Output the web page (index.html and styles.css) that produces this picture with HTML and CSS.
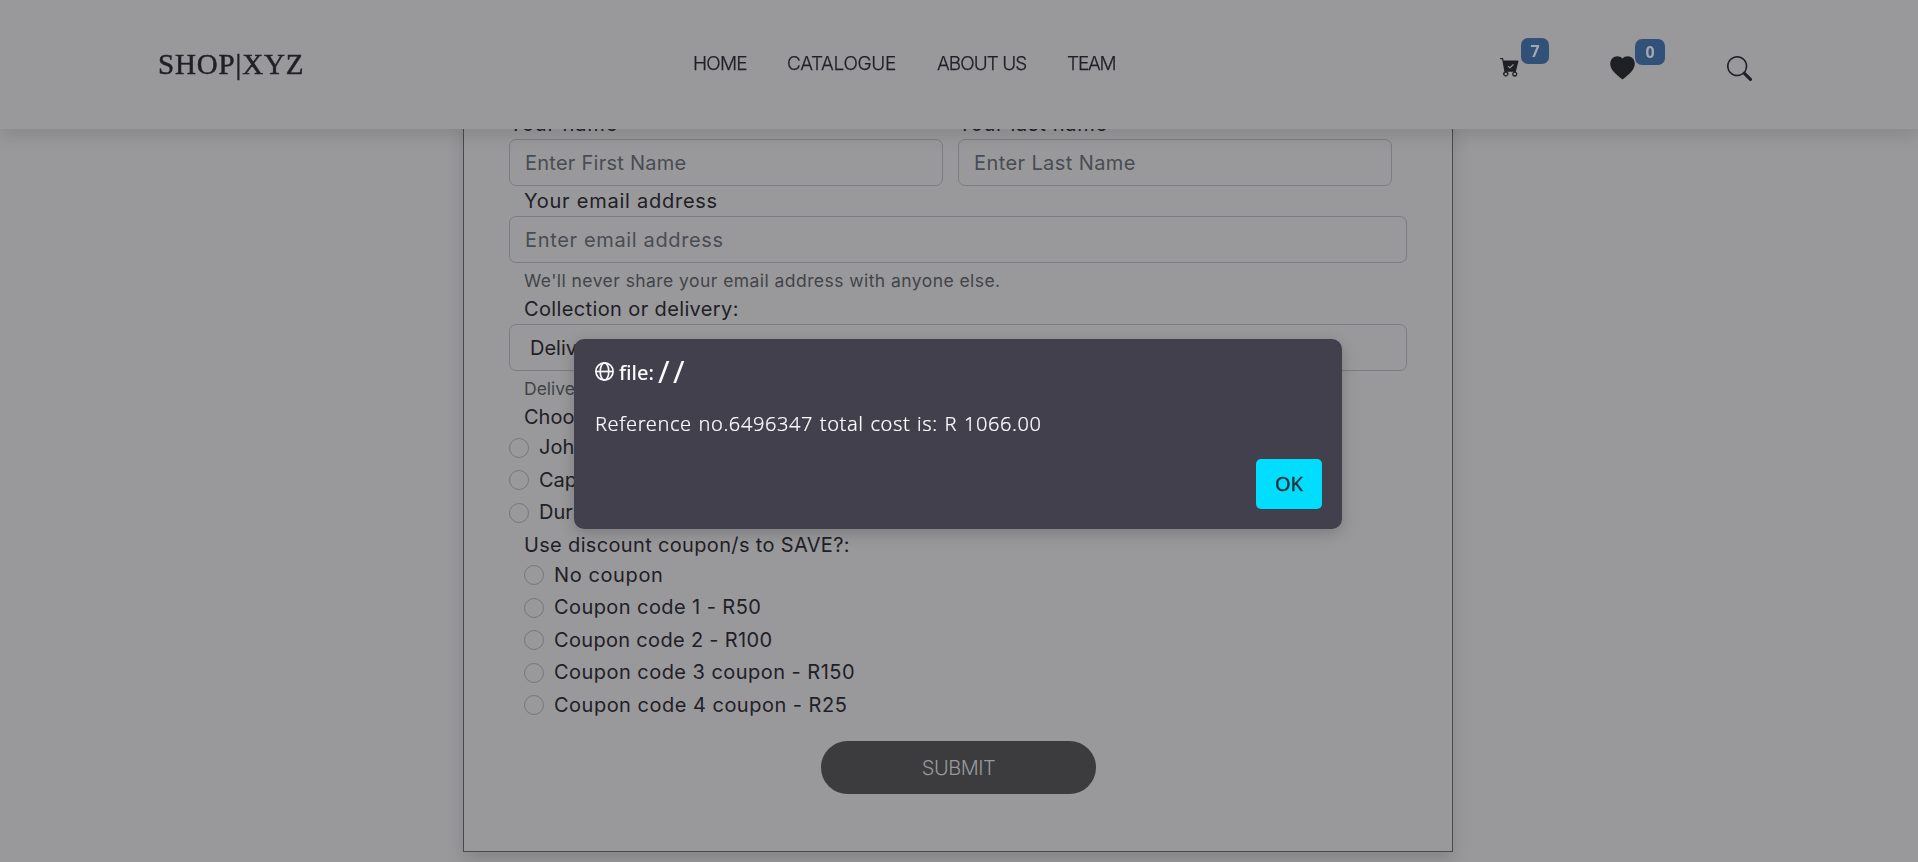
FILE: index.html
```
<!DOCTYPE html>
<html lang="en">
<head>
<meta charset="utf-8">
<title>SHOP|XYZ</title>
<link rel="stylesheet" href="styles.css">
</head>
<body>
<header class="header">
  <div class="logo">SHOP|XYZ</div>
  <nav class="nav"><a class="n1">HOME</a><a class="n2">CATALOGUE</a><a class="n3">ABOUT US</a><a class="n4">TEAM</a></nav>
  <div class="tools">
    <div class="tool cart">
      <svg width="19" height="19" viewBox="0 0 16 16" fill="currentColor"><path fill-rule="evenodd" d="M.5 0a.5.5 0 0 0 0 1h1.300l1.900 10.500a2.200 2.200 0 1 0 2.300 0h5.500a2.200 2.200 0 1 0 1.800 0l2.200-8.500a.6.6 0 0 0-.5-.8H3L2.700.4A.5.5 0 0 0 2.200 0zM4.900 12.400a1.100 1.100 0 1 1 0 2.200 1.100 1.100 0 0 1 0-2.200zm7.500 0a1.100 1.100 0 1 1 0 2.200 1.100 1.100 0 0 1 0-2.200zM11.700 5.700 8.700 8.700a.5.5 0 0 1-.7 0L6.500 7.200l.7-.7 1.150 1.150L11 5z"/></svg>
      <span class="badge">7</span>
    </div>
    <div class="tool heart">
      <svg width="25" height="24" viewBox="0 0 25 24" fill="currentColor"><path d="M12.500 2.500C9.500-1 4-.5 1.500 3.200-1 7.500.4 12 3.500 15.500c2.700 3.100 6 5.600 9 8 3-2.400 6.300-4.900 9-8 3.100-3.500 4.500-8 2-12.300C21-.5 15.500-1 12.500 2.500z"/></svg>
      <span class="badge zero">0</span>
    </div>
    <svg class="search" width="25" height="25" viewBox="0 0 16 16" fill="currentColor"><path d="M11.742 10.344a6.500 6.500 0 1 0-1.397 1.398h-.001c.03.04.062.078.098.115l3.850 3.850a1 1 0 0 0 1.415-1.414l-3.850-3.850a1.007 1.007 0 0 0-.115-.1zM12 6.500a5.500 5.500 0 1 1-11 0 5.500 5.500 0 0 1 11 0z"/></svg>
  </div>
</header>
<main class="card">
  <div class="names">
    <div class="name"><div class="label t1">Your name</div><div class="field"><span class="p1">Enter First Name</span></div></div>
    <div class="name"><div class="label t2">Your last name</div><div class="field"><span class="p2">Enter Last Name</span></div></div>
  </div>
  <div class="label in"><span class="t3">Your email address</span></div>
  <div class="field"><span class="p3">Enter email address</span></div>
  <div class="help"><span class="h1">We'll never share your email address with anyone else.</span></div>
  <div class="label in"><span class="t4">Collection or delivery:</span></div>
  <div class="field select"><span>Delivery</span></div>
  <div class="help"><span>Delivery fee</span></div>
  <div class="label in"><span>Choose</span></div>
  <div class="radio"><i></i><span>Johannesburg</span></div>
  <div class="radio"><i></i><span>Cape Town</span></div>
  <div class="radio"><i></i><span>Durban</span></div>
  <div class="label in"><span class="t5">Use discount coupon/s to SAVE?:</span></div>
  <div class="coupons">
    <div class="radio"><i></i><span class="c0">No coupon</span></div>
    <div class="radio"><i></i><span class="c1">Coupon code 1 - R50</span></div>
    <div class="radio"><i></i><span class="c2">Coupon code 2 - R100</span></div>
    <div class="radio"><i></i><span class="c3">Coupon code 3 coupon - R150</span></div>
    <div class="radio"><i></i><span class="c4">Coupon code 4 coupon - R25</span></div>
  </div>
  <div class="submit"><span>SUBMIT</span></div>
</main>
<div class="dialog">
  <div class="origin">
    <svg width="19" height="19" viewBox="0 0 19 19" fill="none" stroke="currentColor" stroke-width="1.700"><circle cx="9.500" cy="9.500" r="8.600"/><ellipse cx="9.500" cy="9.500" rx="4.300" ry="8.600"/><path d="M1 9.500h17"/></svg>
    <span class="scheme">file:</span><span class="slashes">//</span>
  </div>
  <div class="message">Reference no.6496347 total cost is: R 1066.00</div>
  <div class="ok">OK</div>
</div>
</body>
</html>
```
FILE: styles.css
```
* { box-sizing: border-box; }
body { margin: 0; height: 862px; overflow: hidden; background: #99999b; color: #1f2026; font: 20px/30px Inter, "Liberation Sans", sans-serif; }
.header { position: fixed; z-index: 2; top: 0; left: 0; width: 1918px; height: 129px; background: #99999b; box-shadow: 0 8px 16px rgba(0,0,0,.1); display: grid; grid-template-columns: 535px 807px 1fr; padding-left: 158px; }
.logo { font: 29px/36px "Liberation Serif", serif; padding-top: 46px; letter-spacing: .85px; -webkit-text-stroke: .5px; }
.nav { display: flex; gap: 40px; padding-top: 49px; font-size: 19px; font-weight: 300; white-space: nowrap; -webkit-text-stroke: .25px; }
.n1 { width: 54px; letter-spacing: -.8px; }
.n2 { width: 110px; letter-spacing: -.35px; }
.n3 { width: 90px; letter-spacing: -.95px; }
.n4 { letter-spacing: -1.200px; }
.tools { display: flex; align-items: flex-start; }
.tools svg { display: block; flex: none; }
.tool { display: flex; align-items: flex-start; }
.cart { width: 110px; gap: 2px; } .cart svg { margin-top: 58px; }
.heart { width: 117px; } .heart svg { margin-top: 56px; }
.search { margin-top: 56px; }
.badge { width: 28px; height: 26px; margin-top: 38px; border-radius: 7px; background: #315178; color: #a3a8af; font: bold 16px/26px "Noto Sans", sans-serif; text-align: center; }
.zero { width: 30px; margin-top: 39px; }
.card { width: 990px; height: 743px; margin: 109px 0 0 463px; padding: 0 45px; border: 1px solid #484a4f; border-top: 0; box-shadow: 0 8px 16px rgba(0,0,0,.13); white-space: nowrap; }
.names { display: grid; grid-template-columns: 434px 434px; column-gap: 15px; }
.label { height: 30px; }
.in { padding-left: 15px; }
.field { height: 47px; border: 1px solid #7c7d83; border-radius: 7px; padding: 8px 15px; color: #494c52; }
.select { padding-left: 20px; color: #1f2026; }
.help { height: 31px; padding: 4px 0 0 15px; font-size: 17.500px; line-height: 27px; color: #424449; }
.radio { height: 32.500px; display: flex; gap: 10px; line-height: 31px; }
.radio i { width: 20px; height: 20px; margin-top: 5.500px; border: 1px solid #77777a; border-radius: 50%; }
.coupons { padding-left: 15px; }
.t1 { letter-spacing: .9px; } .t2 { letter-spacing: .7px; } .t3 { letter-spacing: .75px; }
.t4 { letter-spacing: .37px; } .t5 { letter-spacing: .34px; }
.p1 { letter-spacing: .25px; } .p2 { letter-spacing: .4px; } .p3 { letter-spacing: .65px; }
.h1 { letter-spacing: .44px; }
.c0 { letter-spacing: .6px; } .c1 { letter-spacing: .42px; } .c2 { letter-spacing: .32px; }
.c3 { letter-spacing: .46px; } .c4 { letter-spacing: .49px; }
.submit { width: 275px; height: 53px; margin: 19px auto 0 312px; border-radius: 27px; background: #3c3c3e; color: #99999b; font-weight: 300; text-align: center; line-height: 55px; letter-spacing: -.5px; }
.dialog { position: fixed; z-index: 3; left: 574px; top: 339px; width: 768px; height: 190px; padding: 20px 20px 20px 21px; display: flex; flex-direction: column; border-radius: 10px; background: #42404d; color: #fbfbfe; box-shadow: 0 4px 16px rgba(0,0,0,.2); font-family: "Noto Sans", sans-serif; }
.origin { display: flex; height: 28px; align-items: flex-start; font-weight: 500; line-height: 28px; }
.origin svg { margin: 3px 5px 0 0; }
.scheme { width: 39px; }
.slashes { font-size: 31px; font-weight: 400; line-height: 24px; letter-spacing: 3.500px; }
.message { margin-top: 23px; font-weight: 300; line-height: 28px; letter-spacing: .6px; word-spacing: 1px; white-space: nowrap; -webkit-text-stroke: .2px; }
.ok { width: 66px; height: 50px; margin: auto 0 0 auto; border-radius: 5px; background: #00ddff; color: #2b2a33; text-align: center; line-height: 49px; font-weight: 400; -webkit-text-stroke: .3px; }
```
